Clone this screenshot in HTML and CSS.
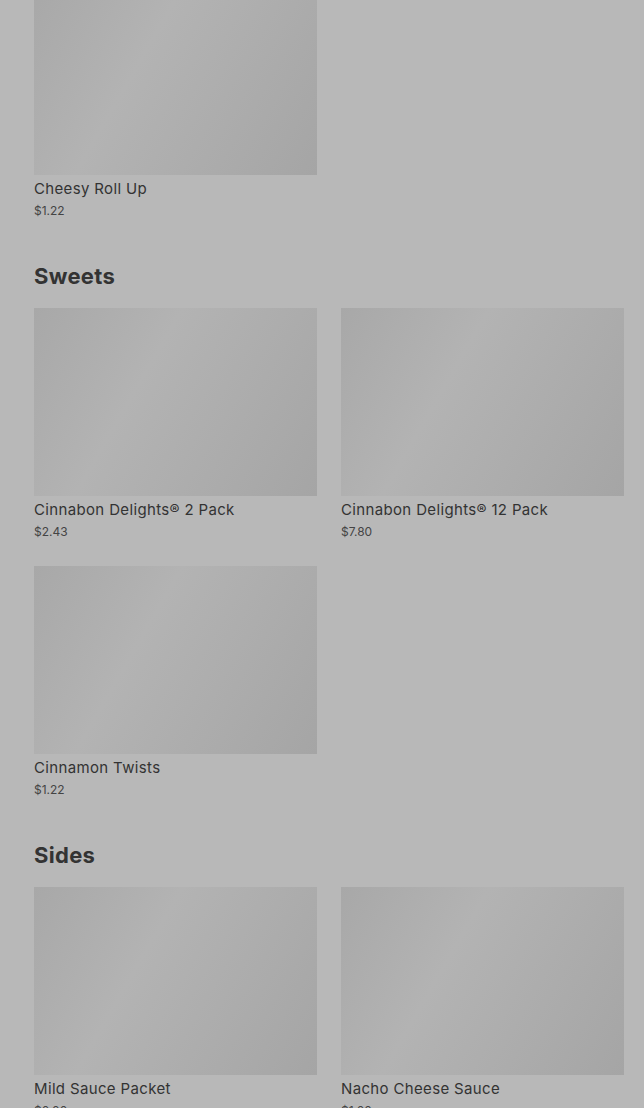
FILE: index.html
```html
<!DOCTYPE html>
<html lang="en">
<head>
<meta charset="utf-8">
<title>Menu</title>
<link rel="stylesheet" href="styles.css">
</head>
<body>
<main class="menu">
  <section class="category category--first">
    <div class="grid">
      <div class="card">
        <div class="thumb"></div>
        <div class="name">Cheesy Roll Up</div>
        <div class="price">$1.22</div>
      </div>
    </div>
  </section>
  <section class="category">
    <h2 class="title">Sweets</h2>
    <div class="grid">
      <div class="card">
        <div class="thumb"></div>
        <div class="name">Cinnabon Delights® 2 Pack</div>
        <div class="price">$2.43</div>
      </div>
      <div class="card">
        <div class="thumb"></div>
        <div class="name">Cinnabon Delights® 12 Pack</div>
        <div class="price">$7.80</div>
      </div>
      <div class="card">
        <div class="thumb"></div>
        <div class="name">Cinnamon Twists</div>
        <div class="price">$1.22</div>
      </div>
    </div>
  </section>
  <section class="category">
    <h2 class="title">Sides</h2>
    <div class="grid">
      <div class="card">
        <div class="thumb"></div>
        <div class="name">Mild Sauce Packet</div>
        <div class="price">$0.00</div>
      </div>
      <div class="card">
        <div class="thumb"></div>
        <div class="name">Nacho Cheese Sauce</div>
        <div class="price">$1.00</div>
      </div>
    </div>
  </section>
</main>
</body>
</html>
```

FILE: styles.css
```css
html, body {
  margin: 0;
  padding: 0;
  background: #b8b8b8;
}
body {
  font-family: Inter, "Noto Sans", sans-serif;
  color: #363636;
  overflow: hidden;
  height: 1108px;
}
.menu {
  padding: 0 20px 0 34px;
  margin-top: -13px;
}
.category {
  margin-top: 41px;
}
.category--first {
  margin-top: 0;
}
.title {
  margin: 0 0 18px;
  font-size: 22px;
  line-height: 28px;
  font-weight: 700;
  color: #333;
  letter-spacing: 0.3px;
}
.grid {
  display: grid;
  grid-template-columns: 283px 283px;
  column-gap: 24px;
  row-gap: 24px;
}
.card {
  display: flex;
  flex-direction: column;
}
.thumb {
  height: 188px;
  background: linear-gradient(120deg, #a8a8a8 0%, #b3b3b3 38%, #a5a5a5 100%);
}
.name {
  margin-top: 4px;
  font-size: 15px;
  line-height: 20px;
  font-weight: 400;
  letter-spacing: 0.35px;
  color: #333;
}
.price {
  margin-top: 1px;
  font-size: 12px;
  line-height: 21px;
  color: #444;
}
```
